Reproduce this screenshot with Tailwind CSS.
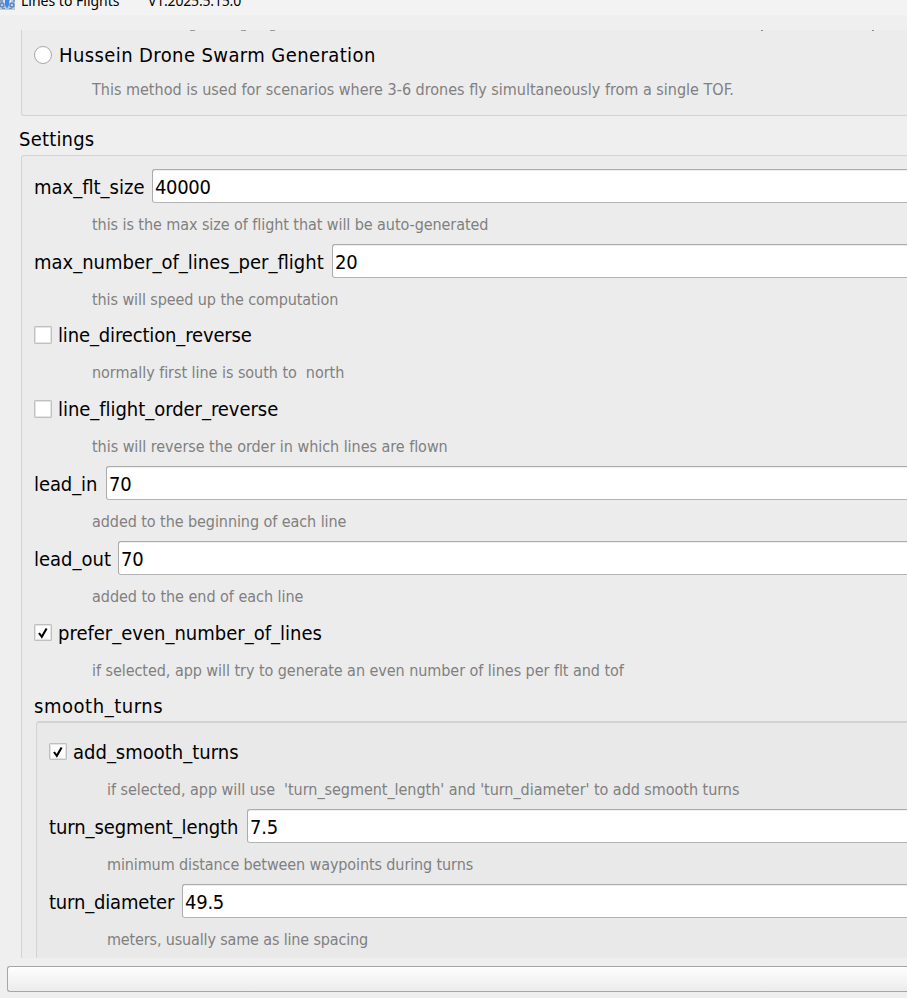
<!DOCTYPE html>
<html lang="en">
<head>
<meta charset="utf-8">
<title>Lines to Flights</title>
<script src="https://cdn.jsdelivr.net/npm/@tailwindcss/browser@4"></script>
</head>
<body class="w-[907px] h-[998px] overflow-hidden bg-[#efefef] flex flex-col font-['DejaVu_Sans_Condensed','DejaVu_Sans',sans-serif] text-[20px] leading-[24px] text-black whitespace-pre">
<header class="h-[15px] shrink-0 bg-[#f3f3f3] overflow-hidden flex items-start font-['Noto_Sans',sans-serif] text-[14px] leading-[20px]"><svg class="w-[15px] h-[10px] shrink-0" viewBox="0 0 15 10"><rect width="15" height="10" fill="#b5cbe8"/><path d="M0 1h3M7 0h3M13 1h2" stroke="#7f9fc9" stroke-width="2"/><path d="M4 0v6M10.500 0v6" stroke="#e4edf8" stroke-width="1.300"/><path d="M5 0h4v5l-2 3.500L5 5z" fill="#4189e0"/><circle cx="2" cy="5" r="2" fill="none" stroke="#5f7fae" stroke-width="1.300"/><circle cx="12" cy="5" r="2" fill="none" stroke="#5f7fae" stroke-width="1.300"/><path d="M2 8.500h3M9 8.500h3" stroke="#7c8ca6"/></svg><span class="-mt-[9px] ml-[6px] w-[127px]">Lines to Flights</span><span class="-mt-[9px] tracking-[-0.18px]">V1.2025.5.15.0</span></header>

<main class="mt-[15px] h-[928px] shrink-0 overflow-hidden flex flex-col pl-[21px]">
<section class="relative h-[86px] shrink-0 bg-[#ececec] border-l border-b border-[#d3d3d3] rounded-bl-[3px] flex flex-col">
<div class="absolute inset-x-0 top-0 h-px"><i class="absolute left-[168px] w-[5px] h-px bg-[#9c9c9c]"></i><i class="absolute left-[219px] w-[5px] h-px bg-[#9c9c9c]"></i><i class="absolute left-[248px] w-[5px] h-px bg-[#9c9c9c]"></i><i class="absolute left-[739px] w-[2px] h-px bg-[#8c8c8c]"></i><i class="absolute left-[850px] w-[2px] h-px bg-[#8c8c8c]"></i></div>
<div class="h-[50px] shrink-0 flex items-center pl-[12px]"><span class="size-[18px] rounded-full bg-white border border-[#a8a8a8]"></span><span class="ml-[7px] tracking-[0.4px]">Hussein Drone Swarm Generation</span></div>
<p class="pl-[70px] -mt-[2px] text-[16px] text-[#808080]">This method is used for scenarios where 3-6 drones fly simultaneously from a single TOF.</p>
</section>

<h2 class="h-[39px] shrink-0 pt-[11px] -ml-[2px] tracking-[0.2px]">Settings</h2>

<section class="h-[820px] shrink-0 bg-[#ececec] border-l border-t border-[#d3d3d3] rounded-tl-[3px] flex flex-col pt-[13px] pl-[12px]">
<label class="h-[34px] shrink-0 flex"><span class="w-[118px] pt-[6px]">max_flt_size</span><span class="flex-1 bg-white border border-r-0 border-[#ababab] border-b-[#b4b4b4] rounded-l-[3px] pl-[2px] pt-[5px] tracking-[-0.35px] shadow-[inset_0_1px_0_#efefef]">40000</span></label>
<p class="h-[41px] shrink-0 pl-[58px] pt-[10px] text-[16px] text-[#808080] tracking-[-0.07px]">this is the max size of flight that will be auto-generated</p>
<label class="h-[34px] shrink-0 flex"><span class="w-[298px] pt-[6px]">max_number_of_lines_per_flight</span><span class="flex-1 bg-white border border-r-0 border-[#ababab] border-b-[#b4b4b4] rounded-l-[3px] pl-[2px] pt-[5px] tracking-[-0.25px] shadow-[inset_0_1px_0_#efefef]">20</span></label>
<p class="h-[41px] shrink-0 pl-[58px] pt-[10px] text-[16px] text-[#808080] tracking-[-0.09px]">this will speed up the computation</p>
<label class="h-[33px] shrink-0 flex items-start"><span class="mt-[7px] size-[18px] bg-white border border-[#c0c0c0] rounded-[1px] shadow-[inset_0_0_0_1px_#e4e4e4]"></span><span class="mt-[4px] ml-[6px] tracking-[-0.14px]">line_direction_reverse</span></label>
<p class="h-[41px] shrink-0 pl-[58px] pt-[9px] text-[16px] text-[#808080] tracking-[-0.04px]">normally first line is south to  north</p>
<label class="h-[33px] shrink-0 flex items-start"><span class="mt-[7px] size-[18px] bg-white border border-[#c0c0c0] rounded-[1px] shadow-[inset_0_0_0_1px_#e4e4e4]"></span><span class="mt-[4px] ml-[6px] tracking-[-0.04px]">line_flight_order_reverse</span></label>
<p class="h-[40px] shrink-0 pl-[58px] pt-[9px] text-[16px] text-[#808080] tracking-[-0.04px]">this will reverse the order in which lines are flown</p>
<label class="h-[34px] shrink-0 flex"><span class="w-[72px] pt-[6px] tracking-[-0.08px]">lead_in</span><span class="flex-1 bg-white border border-r-0 border-[#ababab] border-b-[#b4b4b4] rounded-l-[3px] pl-[2px] pt-[5px] tracking-[-0.25px] shadow-[inset_0_1px_0_#efefef]">70</span></label>
<p class="h-[41px] shrink-0 pl-[58px] pt-[10px] text-[16px] text-[#808080] tracking-[-0.07px]">added to the beginning of each line</p>
<label class="h-[34px] shrink-0 flex"><span class="w-[84px] pt-[6px]">lead_out</span><span class="flex-1 bg-white border border-r-0 border-[#ababab] border-b-[#b4b4b4] rounded-l-[3px] pl-[2px] pt-[5px] tracking-[-0.25px] shadow-[inset_0_1px_0_#efefef]">70</span></label>
<p class="h-[41px] shrink-0 pl-[58px] pt-[10px] text-[16px] text-[#808080] tracking-[-0.03px]">added to the end of each line</p>
<label class="h-[34px] shrink-0 flex items-start"><span class="mt-[8px] w-[18px] h-[17px] bg-white border border-[#c0c0c0] rounded-[1px] shadow-[inset_0_0_0_1px_#e4e4e4]"><svg class="block size-[16px]" viewBox="0 0 16 16"><path d="M4 8 6.800 11.800 11.600 3.500" fill="none" stroke="#000" stroke-width="2.100"/></svg></span><span class="mt-[5px] ml-[6px]">prefer_even_number_of_lines</span></label>
<p class="h-[40px] shrink-0 pl-[58px] pt-[9px] text-[16px] text-[#808080] tracking-[-0.05px]">if selected, app will try to generate an even number of lines per flt and tof</p>
<h3 class="h-[31px] shrink-0 pt-[4px] tracking-[0.55px]">smooth_turns</h3>

<div class="flex-1 ml-[2px] bg-[#e9e9e9] border-l border-t-2 border-[#d3d3d3] rounded-tl-[3px] flex flex-col pt-[12px] pl-[12px]">
<label class="h-[34px] shrink-0 flex items-start"><span class="mt-[8px] w-[18px] h-[17px] bg-white border border-[#c0c0c0] rounded-[1px] shadow-[inset_0_0_0_1px_#e4e4e4]"><svg class="block size-[16px]" viewBox="0 0 16 16"><path d="M4 8 6.800 11.800 11.600 3.500" fill="none" stroke="#000" stroke-width="2.100"/></svg></span><span class="mt-[5px] ml-[6px]">add_smooth_turns</span></label>
<p class="h-[40px] shrink-0 pl-[58px] pt-[9px] text-[16px] text-[#808080] tracking-[-0.04px]">if selected, app will use  'turn_segment_length' and 'turn_diameter' to add smooth turns</p>
<label class="h-[34px] shrink-0 flex"><span class="w-[198px] pt-[6px] tracking-[-0.1px]">turn_segment_length</span><span class="flex-1 bg-white border border-r-0 border-[#ababab] border-b-[#b4b4b4] rounded-l-[3px] pl-[2px] pt-[5px] tracking-[-0.25px] shadow-[inset_0_1px_0_#efefef]">7.5</span></label>
<p class="h-[41px] shrink-0 pl-[58px] pt-[10px] text-[16px] text-[#808080] tracking-[-0.11px]">minimum distance between waypoints during turns</p>
<label class="h-[34px] shrink-0 flex"><span class="w-[133px] pt-[6px] tracking-[-0.18px]">turn_diameter</span><span class="flex-1 bg-white border border-r-0 border-[#ababab] border-b-[#b4b4b4] rounded-l-[3px] pl-[2px] pt-[5px] tracking-[-0.25px] shadow-[inset_0_1px_0_#efefef]">49.5</span></label>
<p class="h-[40px] shrink-0 pl-[58px] pt-[10px] text-[16px] text-[#808080] tracking-[-0.15px]">meters, usually same as line spacing</p>
</div>
</section>
</main>

<footer class="mt-[8px] ml-[7px] h-[26px] shrink-0 border border-r-0 border-[#a6a6a6] rounded-l-[3px] bg-linear-to-b from-[#fefefe] to-[#ececec]"></footer>
</body>
</html>
